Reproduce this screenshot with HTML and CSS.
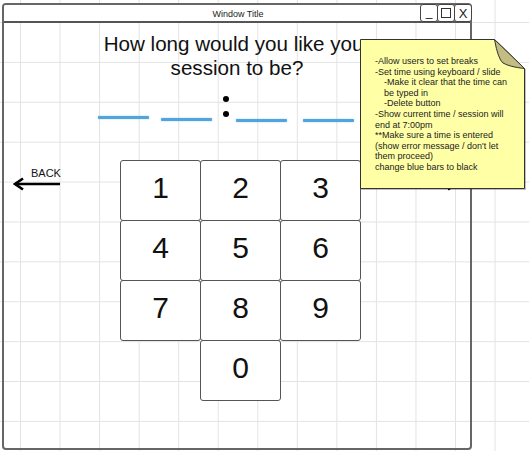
FILE: index.html
```html
<!DOCTYPE html>
<html>
<head>
<meta charset="utf-8">
<link rel="stylesheet" href="styles.css">
</head>
<body>
<div class="window">
  <div class="titlebar">
    <span class="title">Window Title</span>
    <div class="controls">
      <span class="ctl ctl-min">_</span>
      <span class="ctl ctl-max"><span class="sq"></span></span>
      <span class="ctl ctl-close">X</span>
    </div>
  </div>
  <div class="content">
    <h1 class="question">How long would you like your<br>session to be?</h1>
    <div class="time-row">
      <span class="dash d1"></span>
      <span class="dash d2"></span>
      <span class="colon"><span class="dot"></span><span class="dot dot2"></span></span>
      <span class="dash d3"></span>
      <span class="dash d4"></span>
    </div>
    <div class="middle">
      <div class="back">
        <span class="back-label">BACK</span>
        <svg class="arrow" width="48" height="14" viewBox="0 0 48 14">
          <line x1="2" y1="7" x2="47" y2="7" stroke="#000" stroke-width="2.6"/>
          <polyline points="10,1.5 2,7 10,12.5" fill="none" stroke="#000" stroke-width="2.6" stroke-linejoin="miter"/>
        </svg>
      </div>
      <div class="keypad">
        <div class="key">1</div>
        <div class="key">2</div>
        <div class="key">3</div>
        <div class="key">4</div>
        <div class="key">5</div>
        <div class="key">6</div>
        <div class="key">7</div>
        <div class="key">8</div>
        <div class="key">9</div>
        <div class="key key-zero">0</div>
      </div>
    </div>
  </div>
</div>
<svg class="next-arrow" width="48" height="14" viewBox="0 0 48 14">
  <line x1="1" y1="7" x2="46" y2="7" stroke="#000" stroke-width="2.6"/>
  <polyline points="38,1.5 46,7 38,12.5" fill="none" stroke="#000" stroke-width="2.6"/>
</svg>
<div class="note">
  <svg class="note-shape" width="166" height="152" viewBox="0 0 166 152">
    <path d="M0.5 0.5 L134.5 0.5 L164.5 29.5 L164.5 149.5 L0.5 149.5 Z" fill="#ffffa5" stroke="#333" stroke-width="1"/>
    <path d="M134.5 0.5 Q138 20 143 24 Q150 28 164.5 29.5 Z" fill="#c4bd82" stroke="#333" stroke-width="1" stroke-linejoin="round"/>
  </svg>
  <div class="note-text">
    <div>-Allow users to set breaks</div>
    <div>-Set time using keyboard / slide</div>
    <div class="indent">-Make it clear that the time can</div>
    <div class="indent">be typed in</div>
    <div class="indent">-Delete button</div>
    <div>-Show current time / session will</div>
    <div>end at 7:00pm</div>
    <div>**Make sure a time is entered</div>
    <div>(show error message / don't let</div>
    <div>them proceed)</div>
    <div>change blue bars to black</div>
  </div>
</div>
</body>
</html>
```
FILE: styles.css
```css
html, body {
  margin: 0;
  padding: 0;
  height: 100%;
  overflow: hidden;
}
body {
  position: relative;
  font-family: "Liberation Sans", Arial, sans-serif;
  color: #111;
  background-color: #fff;
  background-image:
    linear-gradient(to right, #e3e3e3 1px, transparent 1px),
    linear-gradient(to bottom, #e3e3e3 1px, transparent 1px);
  background-size: 39.55px 39.9px;
  background-position: 20px 22px;
}
.window {
  box-sizing: border-box;
  margin: 3px 0 0 2px;
  width: 470px;
  height: 447px;
  border: 2px solid #666;
  border-radius: 4px;
  display: flex;
  flex-direction: column;
}
.titlebar {
  display: grid;
  grid-template-areas: "bar";
  height: 16px;
  background: #fff;
  border-bottom: 2px solid #555;
  border-radius: 2px 2px 0 0;
}
.title {
  grid-area: bar;
  justify-self: center;
  align-self: center;
  font-size: 9px;
  color: #222;
  margin-left: 2px;
}
.controls {
  grid-area: bar;
  justify-self: end;
  display: flex;
  margin-top: -1px;
  margin-right: -2px;
  height: 18px;
}
.ctl {
  box-sizing: border-box;
  width: 18px;
  height: 18px;
  border: 1.5px solid #444;
  border-radius: 3px;
  background: #fff;
  display: flex;
  align-items: center;
  justify-content: center;
  font-size: 13px;
  line-height: 1;
  color: #222;
}
.ctl + .ctl { margin-left: -1px; }
.ctl-min { align-items: flex-end; padding-bottom: 3px; font-size: 12px; }
.ctl-close { font-size: 13px; font-weight: normal; }
.sq {
  width: 8px;
  height: 8px;
  border: 1.5px solid #333;
}
.content {
  flex: 1;
}
.question {
  margin: 9px 0 0 0;
  font-size: 20.6px;
  font-weight: normal;
  line-height: 24px;
  text-align: center;
  color: #111;
}
.time-row {
  display: flex;
  align-items: flex-start;
  height: 30px;
  margin-top: 15px;
  padding-left: 94px;
}
.dash {
  display: block;
  width: 51px;
  height: 3px;
  background: #52a5da;
  box-shadow: 0 0 1.5px rgba(60, 150, 210, 0.6);
  border-radius: 1px;
}
.d1 { margin-top: 21px; }
.d2 { margin-top: 23px; margin-left: 12px; }
.d3 { margin-top: 24px; margin-left: 7px; }
.d4 { margin-top: 24px; margin-left: 16px; }
.colon {
  display: flex;
  flex-direction: column;
  margin-left: 11px;
  margin-top: 1px;
}
.dot {
  width: 6px;
  height: 6px;
  border-radius: 50%;
  background: #000;
}
.dot2 { margin-top: 9px; }
.middle {
  display: flex;
  align-items: flex-start;
  margin-top: 35px;
  padding-left: 9px;
}
.back {
  display: flex;
  flex-direction: column;
  width: 48px;
  margin-top: 7px;
}
.back-label {
  font-size: 11px;
  line-height: 13px;
  padding-left: 18px;
  color: #111;
}
.arrow {
  display: block;
  margin-top: -3px;
}
.keypad {
  display: grid;
  grid-template-columns: repeat(3, 80px);
  grid-auto-rows: 60px;
  margin-left: 59px;
}
.key {
  box-sizing: border-box;
  width: 81px;
  height: 61px;
  border: 1px solid #555;
  border-radius: 3px;
  background: #fff;
  display: flex;
  align-items: center;
  justify-content: center;
  padding-bottom: 5px;
  font-size: 30px;
  color: #111;
}
.key-zero { grid-column: 2; }
.next-arrow {
  position: absolute;
  left: 410px;
  top: 177px;
}
.note {
  position: absolute;
  left: 360px;
  top: 39px;
  width: 166px;
  height: 152px;
}
.note-shape {
  position: absolute;
  left: 0;
  top: 0;
  filter: drop-shadow(1px 1px 0.5px rgba(0,0,0,0.25));
}
.note-text {
  position: relative;
  padding: 17px 0 0 15px;
  font-size: 9px;
  line-height: 10.6px;
  color: #222;
  white-space: nowrap;
}
.indent { padding-left: 9px; }
```
